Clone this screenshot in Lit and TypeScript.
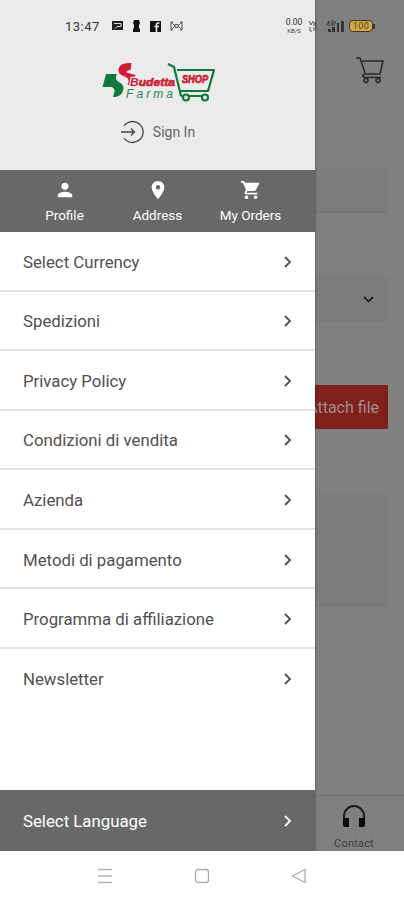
import { LitElement, html, svg, css } from "lit";
import { customElement } from "lit/decorators.js";

const chevron = html`<svg class="chev" width="10" height="14" viewBox="0 0 10 14"><path d="M2 2l5 5-5 5" fill="none" stroke="currentColor" stroke-width="1.8"/></svg>`;

const cartPath = "M7 18c-1.1 0-1.99.9-1.99 2S5.9 22 7 22s2-.9 2-2-.9-2-2-2zM1 2v2h2l3.6 7.59-1.35 2.45c-.16.28-.25.61-.25.96 0 1.1.9 2 2 2h12v-2H7.42c-.14 0-.25-.11-.25-.25l.03-.12.9-1.63h7.45c.75 0 1.41-.41 1.75-1.03l3.58-6.49A1.003 1.003 0 0 0 20 4H5.21l-.94-2H1zm16 16c-1.1 0-1.99.9-1.99 2s.89 2 1.99 2 2-.9 2-2-.9-2-2-2z";

const shortcuts = [
  { label: "Profile", path: "M12 12c2.21 0 4-1.79 4-4s-1.79-4-4-4-4 1.79-4 4 1.79 4 4 4zm0 2c-2.67 0-8 1.34-8 4v2h16v-2c0-2.66-5.33-4-8-4z" },
  { label: "Address", path: "M12 2C8.13 2 5 5.13 5 9c0 5.25 7 13 7 13s7-7.75 7-13c0-3.87-3.13-7-7-7zm0 9.5a2.5 2.5 0 0 1 0-5 2.5 2.5 0 0 1 0 5z" },
  { label: "My Orders", path: cartPath },
];

const entries = [
  "Select Currency",
  "Spedizioni",
  "Privacy Policy",
  "Condizioni di vendita",
  "Azienda",
  "Metodi di pagamento",
  "Programma di affiliazione",
  "Newsletter",
];

@customElement("side-drawer")
class SideDrawer extends LitElement {
  static styles = css`
    :host { display: flex; flex-direction: column; background: #fff; color: #505050; overflow: hidden; }
    header { height: 170px; box-sizing: border-box; padding-top: 60px; background: #ebebeb; display: flex; flex-direction: column; align-items: center; flex: none; }
    .logo { display: block; height: 44px; }
    .sign { display: flex; align-items: center; gap: 8px; margin-top: 15px; font-size: 14px; color: #666; height: 26px; }
    .bar { height: 62px; background: #686868; display: grid; grid-template-columns: 93px 93px 93px; padding-left: 18px; flex: none; color: #fff; }
    .cell { display: flex; flex-direction: column; align-items: center; padding-top: 10px; font-size: 13.5px; line-height: 16px; gap: 7px; white-space: nowrap; }
    .row { height: 59.55px; box-sizing: border-box; display: flex; align-items: center; justify-content: space-between; padding: 2px 22px 0 23px; border-bottom: 2px solid #e3e3e3; font-size: 16.8px; flex: none; }
    .row.last { border-bottom: 0; padding-top: 0; }
    .lang { margin-top: auto; height: 61px; background: #686868; color: #fff; border: 0; padding-top: 0; }
    .chev { display: block; }
    .brand { font: italic 700 11.5px "Liberation Sans", sans-serif; }
    .initial { paint-order: stroke; stroke: #f4eeee; stroke-width: 2.4px; }
    .farma { font: italic 12px "Liberation Sans", sans-serif; }
    .shop { font: italic 700 10px "Liberation Sans", sans-serif; }
  `;
  render() {
    return html`
      <header>
        <svg class="logo" width="116" height="44" viewBox="0 0 116 44">
          <path d="M6 14h11q-3 5 2 8 6 3 4 9-2 6-10 6l1-4q2-3-2-6H2.500z" fill="#137a3c"/>
          <path d="M31.500 3Q20 2 18.500 9q-1 5 5 7 6 2 5 6l-1 3h5l3-10-9-2.500q0-2.500 4-2.500z" fill="#cf1c35"/>
          <text class="brand" x="30" y="26" textLength="45" lengthAdjust="spacingAndGlyphs" fill="#cf1c35" stroke="#cf1c35" stroke-width=".6"><tspan class="initial">B</tspan>udetta</text>
          <text class="farma" x="26" y="38" textLength="47" fill="#23864c">Farma</text>
          <g fill="none" stroke="#137a3c" stroke-width="2.2" stroke-linejoin="round">
            <path d="M68 4l6 3 7 29M77 10h37l-6 21H80M81 36h26"/>
            <circle cx="86" cy="37.500" r="3" fill="#ebebeb"/><circle cx="105" cy="37.500" r="3" fill="#ebebeb"/>
          </g>
          <text class="shop" x="82" y="23" textLength="26" lengthAdjust="spacingAndGlyphs" fill="#cf1c35" stroke="#cf1c35" stroke-width=".7">SHOP</text>
        </svg>
        <div class="sign">
          <svg width="25" height="26" viewBox="0 0 25 26" fill="none" stroke="#444" stroke-width="1.3"><path d="M4 7a10.500 10.500 0 1 1 0 12M1 13h13M11 9.500l3.500 3.500-3.500 3.500"/></svg>
          <span>Sign In</span>
        </div>
      </header>
      <div class="bar">
        ${shortcuts.map((s) => html`<div class="cell"><svg width="20" height="20" viewBox="1 1 22 22" fill="#fff">${svg`<path d=${s.path} />`}</svg><span>${s.label}</span></div>`)}
      </div>
      ${entries.map((e, i) => html`<div class="row ${i === entries.length - 1 ? "last" : ""}"><span>${e}</span>${chevron}</div>`)}
      <div class="row lang"><span>Select Language</span>${chevron}</div>
    `;
  }
}

@customElement("status-bar")
class StatusBar extends LitElement {
  static styles = css`
    :host { display: flex; align-items: center; height: 18px; color: #333; }
    .time { font-size: 13px; letter-spacing: 0.5px; margin-left: 65px; width: 52px; box-sizing: border-box; }
    .left { display: flex; gap: 9px; align-items: center; margin-left: -5px; }
    .right { margin-left: auto; margin-right: 29px; display: flex; align-items: center; }
    .rate { font-size: 8.5px; line-height: 9px; text-align: center; width: 20px; }
    .rate small { display: block; font-size: 6px; line-height: 7px; }
    .volte { width: 15px; margin-left: 4px; }
    .signal { margin-left: 3px; }
    .batt { box-sizing: border-box; width: 24px; height: 12px; border: 1.500px solid #3a3730; border-radius: 4px; background: #d5a844; font: 400 9px/10px Roboto, sans-serif; letter-spacing: 0.5px; text-align: center; color: #4e4223; margin-left: 4px; }
    .tip { width: 2px; height: 5px; background: #3a3730; }
  `;
  render() {
    return html`
      <span class="time">13:47</span>
      <div class="left">
        <svg width="11" height="10" viewBox="0 0 11 10"><path d="M0 0h11v9H0z" fill="#222"/><path d="M2 2.500h7v3H5l-2 2" stroke="#ddd" fill="none"/></svg>
        <svg width="9" height="12" viewBox="0 0 9 12"><path d="M2 0h5l1 3-1 2v3l1 1v3H1V9l1-1V5L1 3z" fill="#111"/></svg>
        <svg width="11" height="11" viewBox="0 0 11 11"><path d="M0 0h11v11H0z" fill="#111"/><path d="M9.500 2H8Q6.500 2 6.500 4v7M4.500 5.500H9" stroke="#eee" stroke-width="1.500" fill="none"/></svg>
        <svg width="13" height="10" viewBox="0 0 13 10" fill="none" stroke="#555"><path d="M3 1H1v8h2M10 1h2v8h-2M1 1l4 4-4 4M12 1L8 5l4 4M5 3.500h3v3H5z"/></svg>
      </div>
      <div class="right">
        <div class="rate">0.00<small>KB/S</small></div>
        <svg class="volte" height="12" viewBox="0 0 15 12" fill="none" stroke="#555"><path d="M1 1l2 4 2-4M6 2.500h2v3H6zM2 7v4h2M6 7v4M8 7v4"/></svg>
        <svg class="signal" width="19" height="12" viewBox="0 0 19 12" fill="#333"><path d="M2 9h3v3H2zM6 7h3v5H6zM11 3h2v9h-2zM15 1h3v11h-3z"/><path d="M1 5l2-4v5M5 1h3M5 3h3M5 5h4M9 1v3" stroke="#333" fill="none"/></svg>
        <div class="batt">100</div><div class="tip"></div>
      </div>
    `;
  }
}

@customElement("app-root")
class AppRoot extends LitElement {
  static styles = css`
    :host { display: block; position: relative; width: 404px; height: 900px; overflow: hidden; font-family: Roboto, sans-serif; background: #fff; }
    .page { height: 851px; background: #808080; display: flex; flex-direction: column; }
    .top { height: 108px; box-sizing: border-box; border-bottom: 1px solid #7b7b7b; display: flex; justify-content: flex-end; padding: 56px 19px 0 0; }
    .form { flex: 1; display: flex; flex-direction: column; padding: 60px 16px 0; }
    .field { background: #7c7c7c; border-bottom: 1px solid #747474; box-sizing: border-box; }
    .input { height: 45px; }
    .select { height: 45px; margin-top: 64px; border-color: #7a7a7a; display: flex; justify-content: flex-end; align-items: center; padding-right: 13px; }
    .attach { align-self: flex-end; margin-top: 63px; height: 44px; width: 92px; box-sizing: border-box; background: #80201c; color: #a18d8c; font-size: 16px; line-height: 46px; text-align: right; padding-right: 9px; white-space: nowrap; }
    .area { height: 112px; margin-top: 65px; }
    .tabs { height: 56px; box-sizing: border-box; border-top: 1px solid #747474; display: flex; justify-content: flex-end; overflow: hidden; }
    .contact { width: 80px; margin-right: 10px; display: flex; flex-direction: column; align-items: center; padding-top: 7px; font-size: 11px; letter-spacing: 0.2px; color: #3c3c3c; gap: 6px; line-height: 15px; }
    side-drawer { position: absolute; left: 0; top: 0; width: 315px; height: 851px; box-shadow: 0 0 2px rgba(0, 0, 0, 0.5); }
    status-bar { position: absolute; left: 0; top: 17px; width: 404px; }
    nav { position: relative; height: 49px; background: #fff; display: flex; justify-content: center; align-items: center; gap: 81px; }
  `;
  render() {
    return html`
      <div class="page">
        <div class="top">
          <svg width="30" height="28" viewBox="0 0 30 28" fill="none" stroke="#282828" stroke-width="1.500"><path d="M1 2h4l5 15M7 5h21l-3 13H10q-4 1-1 3.500h17"/><circle cx="11" cy="24.500" r="2"/><circle cx="23" cy="24.500" r="2"/></svg>
        </div>
        <div class="form">
          <div class="field input"></div>
          <div class="field select"><svg width="13" height="9" viewBox="0 0 13 9"><path d="M2 2l4.500 4.500L11 2" fill="none" stroke="#222" stroke-width="1.800"/></svg></div>
          <div class="attach">Attach file</div>
          <div class="field area"></div>
        </div>
        <div class="tabs"><div class="contact">
          <svg width="26" height="27" viewBox="0 0 26 27"><path d="M3 16v-3a10 10 0 0 1 20 0v3" fill="none" stroke="#1c1c1c" stroke-width="2"/><path d="M2 15h6v9H4q-2 0-2-2zM18 15h6v7q0 2-2 2h-4z" fill="#080808"/></svg>
          <span>Contact</span>
        </div></div>
      </div>
      <side-drawer></side-drawer>
      <status-bar></status-bar>
      <nav>
        <svg width="16" height="16" viewBox="0 0 16 16" stroke="#b5b5b5" stroke-width="1.300"><path d="M1 1.500h14M1 8h14M1 14.500h14"/></svg>
        <svg width="16" height="16" viewBox="0 0 16 16" fill="none" stroke="#aaa" stroke-width="1.300"><rect x="1.500" y="1.500" width="13" height="13" rx="2.500"/></svg>
        <svg width="16" height="16" viewBox="0 0 16 16" fill="none" stroke="#aaa" stroke-width="1.200" stroke-linejoin="round"><path d="M1.500 8L14 1.500v13z"/></svg>
      </nav>
    `;
  }
}
